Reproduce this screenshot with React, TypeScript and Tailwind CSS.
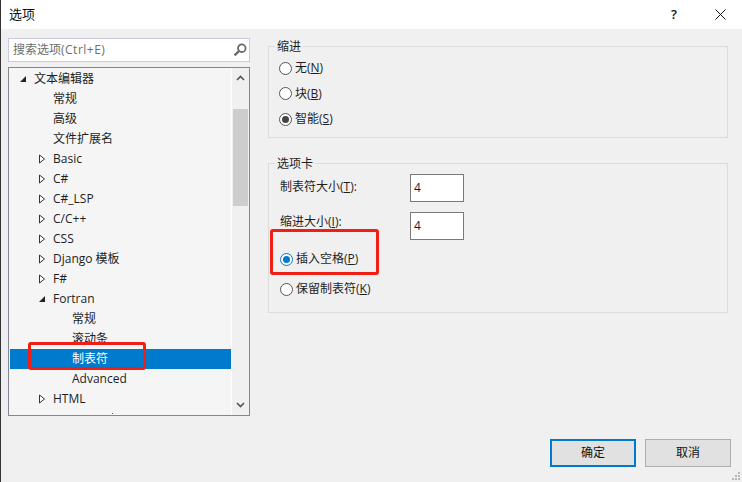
const font = '[font-family:"Open_Sans","Noto_Sans_CJK_SC",sans-serif]';

type Row = { label: string; indent: number; arrow?: 'open' | 'closed'; selected?: boolean };

const rows: Row[] = [
  { label: '文本编辑器', indent: 24, arrow: 'open' },
  { label: '常规', indent: 43 },
  { label: '高级', indent: 43 },
  { label: '文件扩展名', indent: 43 },
  { label: 'Basic', indent: 43, arrow: 'closed' },
  { label: 'C#', indent: 43, arrow: 'closed' },
  { label: 'C#_LSP', indent: 43, arrow: 'closed' },
  { label: 'C/C++', indent: 43, arrow: 'closed' },
  { label: 'CSS', indent: 43, arrow: 'closed' },
  { label: 'Django 模板', indent: 43, arrow: 'closed' },
  { label: 'F#', indent: 43, arrow: 'closed' },
  { label: 'Fortran', indent: 43, arrow: 'open' },
  { label: '常规', indent: 62 },
  { label: '滚动条', indent: 62 },
  { label: '制表符', indent: 62, selected: true },
  { label: 'Advanced', indent: 62 },
  { label: 'HTML', indent: 43, arrow: 'closed' },
];

function Arrow({ type, x }: { type: 'open' | 'closed'; x: number }) {
  return (
    <svg width="8" height="10" viewBox="0 0 8 10" className="absolute top-[5px]" style={{ left: x }}>
      {type === 'open' ? (
        <path d="M1 8 L7 8 L7 2 Z" fill="#222" />
      ) : (
        <path d="M1.5 1 L1.5 9 L6.5 5 Z" fill="#fff" stroke="#333" strokeWidth="1" />
      )}
    </svg>
  );
}

function TreeRow({ row }: { row: Row }) {
  return (
    <div
      className={`relative h-5 shrink-0 leading-5 whitespace-nowrap ${row.selected ? 'bg-[#007acc] text-white' : 'text-[#1e1e1e]'}`}
      style={{ paddingLeft: row.indent }}
    >
      {row.arrow && <Arrow type={row.arrow} x={row.indent - 15} />}
      {row.label}
    </div>
  );
}

function Radio({ checked, blue }: { checked?: boolean; blue?: boolean }) {
  return (
    <span className={`flex size-[13px] shrink-0 items-center justify-center rounded-full border bg-white ${blue ? 'border-[#007acc]' : 'border-[#555]'}`}>
      {checked && <span className={`size-[7px] rounded-full ${blue ? 'bg-[#007acc]' : 'bg-[#444]'}`} />}
    </span>
  );
}

function RadioLine({ label, mn, checked, blue }: { label: string; mn: string; checked?: boolean; blue?: boolean }) {
  return (
    <div className="flex h-5 items-center gap-[3px] text-[#1e1e1e]">
      <Radio checked={checked} blue={blue} />
      <span>
        {label}(<span className="underline">{mn}</span>)
      </span>
    </div>
  );
}

function NumberField({ label, mn, labelClass }: { label: string; mn: string; labelClass: string }) {
  return (
    <div className="flex items-start">
      <span className={`w-[130px] leading-5 text-[#1e1e1e] ${labelClass}`}>
        {label}(<span className="underline">{mn}</span>):
      </span>
      <div className="flex h-7 w-[54px] items-center border border-[#7a7a7a] bg-white pl-[3px] text-[#1e1e1e]">4</div>
    </div>
  );
}

export default function App() {
  return (
    <div className={`relative flex h-[482px] w-[742px] flex-col overflow-hidden border-l border-[#333] bg-[#f0f0f0] text-xs ${font}`}>
      {/* Title bar */}
      <div className="flex h-[29px] shrink-0 items-center justify-between bg-white pl-2 text-[#111]">
        <span className="text-[13px]">选项</span>
        <div className="flex items-center">
          <span className="mr-[38px] text-[13px] font-semibold">?</span>
          <svg width="11" height="11" viewBox="0 0 11 11" className="mr-[16px]">
            <path d="M0.5 0.5 L10.5 10.5 M10.5 0.5 L0.5 10.5" stroke="#111" strokeWidth="1" />
          </svg>
        </div>
      </div>

      <div className="flex min-h-0 flex-1 pl-[7px] pt-[9px]">
        {/* Left column */}
        <div className="flex w-[242px] shrink-0 flex-col gap-[5px]">
          <div className="flex h-[24px] items-center justify-between border border-[#ccc9dc] bg-white pl-[4px] pr-[2px] text-[#6d6d6d]">
            <span>
              搜索选项<span className="tracking-[0.5px]">(Ctrl+E)</span>
            </span>
            <svg width="14" height="14" viewBox="0 0 14 14">
              <circle cx="8.8" cy="5.2" r="3.8" fill="none" stroke="#6a6a6a" strokeWidth="1.8" />
              <path d="M6 8 L1.6 12.4" stroke="#6a6a6a" strokeWidth="2.4" />
            </svg>
          </div>
          <div className="flex h-[349px] border border-[#828790] bg-[#f5f5f5] pl-px">
            <div className="flex min-w-0 flex-1 flex-col overflow-hidden pt-px">
              {rows.map((row, i) => (
                <TreeRow key={i} row={row} />
              ))}
              {/* top of the next row, scrolled almost out of view */}
              <div className="ml-[102px] mt-[4px] size-px shrink-0 bg-[#555]" />
            </div>
            <div className="flex w-[18px] shrink-0 flex-col items-center border-l border-white bg-[#f0f0f0] pr-px">
              <div className="flex h-[41px] w-full items-start justify-center pt-[7px]">
                <svg width="9" height="6" viewBox="0 0 9 6">
                  <path d="M1 5 L4.5 1.5 L8 5" fill="none" stroke="#555" strokeWidth="1.6" />
                </svg>
              </div>
              <div className="h-[97px] w-[15px] bg-[#cdcdcd]" />
              <div className="flex w-full flex-1 items-end justify-center pb-[7px]">
                <svg width="9" height="6" viewBox="0 0 9 6">
                  <path d="M1 1 L4.5 4.5 L8 1" fill="none" stroke="#555" strokeWidth="1.6" />
                </svg>
              </div>
            </div>
          </div>
        </div>

        {/* Right column */}
        <div className="ml-[18px] flex w-[460px] shrink-0 flex-col gap-[17px]">
          <fieldset className="h-[100px] border border-[#dcdcdc] pl-[10px]">
            <legend className="-ml-[4px] px-[2px] pt-px text-[#1e1e1e]">缩进</legend>
            <div className="flex flex-col gap-[5.5px] pt-[3px]">
              <RadioLine label="无" mn="N" />
              <RadioLine label="块" mn="B" />
              <RadioLine label="智能" mn="S" checked />
            </div>
          </fieldset>
          <fieldset className="h-[158px] border border-[#dcdcdc] pl-[11px]">
            <legend className="-ml-[5px] px-[2px] pt-px text-[#1e1e1e]">选项卡</legend>
            <div className="flex flex-col gap-[10px] pt-[2px]">
              <NumberField label="制表符大小" mn="T" labelClass="mt-[3px]" />
              <NumberField label="缩进大小" mn="I" labelClass="mt-0" />
            </div>
            <div className="flex flex-col gap-[10px] pt-[9px]">
              <RadioLine label="插入空格" mn="P" checked blue />
              <RadioLine label="保留制表符" mn="K" />
            </div>
          </fieldset>
        </div>
      </div>

      {/* Footer */}
      <div className="flex h-[43px] shrink-0 justify-end gap-[9px] pr-[11px]">
        <button className="h-7 w-[86px] border-2 border-[#007acc] bg-[#e1e1e1] text-[#111]">确定</button>
        <button className="h-7 w-[86px] border border-[#adadad] bg-[#e1e1e1] text-[#111]">取消</button>
      </div>

      {/* Red annotation boxes */}
      <div className="absolute left-[27px] top-[342px] h-[28px] w-[118px] rounded-[3px] border-[3px] border-[#f01e14]" />
      <div className="absolute left-[269px] top-[229px] h-[46px] w-[109px] rounded-[3px] border-[3px] border-[#f01e14]" />

      {/* Resize grip */}
      <svg width="10" height="10" viewBox="0 0 10 10" className="absolute bottom-[1px] right-[1px]">
        <path d="M7 1h2v2h-2zM4 4h2v2h-2zM7 4h2v2h-2zM1 7h2v2h-2zM4 7h2v2h-2zM7 7h2v2h-2z" fill="#b8b8b8" />
      </svg>
    </div>
  );
}
